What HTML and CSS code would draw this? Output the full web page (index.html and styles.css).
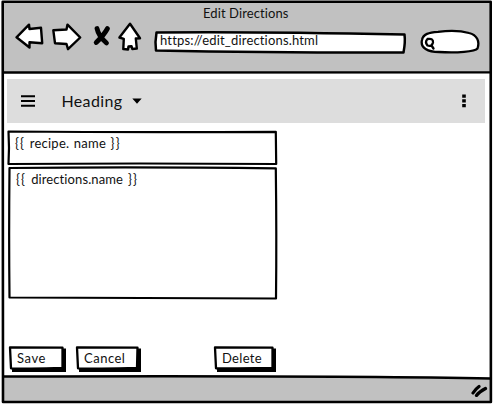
FILE: index.html
```html
<!DOCTYPE html>
<html lang="en">
<head>
<meta charset="utf-8">
<title>Edit Directions</title>
<link rel="stylesheet" href="styles.css">
</head>
<body>
<div class="window">
  <header class="chrome">
    <div class="title"><span class="t-title">Edit Directions</span></div>
    <div class="tools">
      <svg class="nav" width="138" height="40" viewBox="0 0 138 40">
        <g fill="#fff" stroke="#000" stroke-width="2.4" stroke-linejoin="round">
          <path d="M2.500 15.300 15 2.700 15.500 7 27 5.800 28.200 21.200 15.500 20.300 15.500 25.500Z"/>
          <path d="M39.300 8.200 52.500 7.500 53.500 2.600 66.200 15.500 54 27.200 52.500 22 41 21.200Z"/>
          <path d="M116 1.800 126 16.200 121.800 16.500 122.800 26.500 118.300 27 117.500 24.200 114.500 24.500 114 27.500 109.300 27 109.800 16.800 105.400 15.500Z"/>
        </g>
        <path d="M83 6.500Q84.500 14 92.500 21M93.500 6.500Q90 13 82.200 20.500" fill="none" stroke="#000" stroke-width="4.800" stroke-linecap="round"/>
      </svg>
      <div class="url">
        <svg class="sketch" viewBox="0 0 252 24"><path d="M2.500 2.500Q100 1.500 250.500 4.500Q251.500 12 249.500 22.500Q120 22.800 2 20.500Q.8 12 2.500 2.500Z" fill="#fff" stroke="#000" stroke-width="2.500" stroke-linejoin="round"/></svg>
        <span class="t-url">https://edit_directions.html</span>
      </div>
      <svg class="search" width="62" height="28" viewBox="0 0 62 28">
        <path d="M2 12C3 6 9 4.500 18 3.800C29 2.500 42 3 49 5C57 7 60 13 57.500 20.500C55 23.500 37 25.300 19 24C8 24 0 20 2 12Z" fill="#fff" stroke="#000" stroke-width="2.300"/>
        <path d="M7.500 11Q13.500 10 13 14.500Q12 18.800 7.500 17.500Q4.500 14 7.500 11M11.500 17.500 13.500 20.500" fill="none" stroke="#000" stroke-width="2.300" stroke-linecap="round"/>
      </svg>
    </div>
  </header>
  <main class="page">
    <div class="appbar">
      <svg class="burger" width="14" height="12" viewBox="0 0 14 12"><path d="M0 1.300H14M0 6H14M0 10.700H14" stroke="#000" stroke-width="2"/></svg>
      <span class="t-heading">Heading</span>
      <svg class="caret" width="10" height="6" viewBox="0 0 10 6"><path d="M.3 .5H9.700L5 5.800Z"/></svg>
      <svg class="dots" width="4" height="14" viewBox="0 0 4 14"><path d="M.2 .5H3.800V3.800H.2ZM.2 5.200H3.800V8.500H.2ZM.2 10H3.800V13.300H.2Z"/></svg>
    </div>
    <div class="box recipe">
      <svg class="sketch" viewBox="0 0 270 36"><path d="M1.500 1.500Q130 2.500 268.800 1.800L269.200 34Q130 33 1.500 34Q2.500 18 1.500 1.500Z" fill="#fff" stroke="#000" stroke-width="2.200" stroke-linejoin="round"/></svg>
      <span class="t-recipe"><span class="brace">{{</span> recipe. name <span class="brace">}}</span></span>
    </div>
    <div class="box directions">
      <svg class="sketch" viewBox="0 0 270 134"><path d="M2.500 2Q130 .8 268.800 2.300Q269.700 70 269 132.500Q130 131.800 2.500 131.500Q1.800 70 2.500 2Z" fill="#fff" stroke="#000" stroke-width="2.200" stroke-linejoin="round"/></svg>
      <span class="t-directions"><span class="brace">{{</span> directions.name <span class="brace">}}</span></span>
    </div>
    <div class="actions">
      <button class="btn save"><svg class="sketch" viewBox="0 0 57 26"><path d="M53 2.500H57V26H3V22H53Z"/><path d="M1 1.500 53.500 1.700 53.500 22Q25 23 2 22.300Z" fill="#fff" stroke="#000" stroke-width="2.300" stroke-linejoin="round"/></svg><span class="t-save">Save</span></button>
      <button class="btn cancel"><svg class="sketch" viewBox="0 0 65 26"><path d="M61 2.500H65V26H3V22H61Z"/><path d="M1 1.500 61.500 1.700 61 22Q30 23 2 22.300Z" fill="#fff" stroke="#000" stroke-width="2.300" stroke-linejoin="round"/></svg><span class="t-cancel">Cancel</span></button>
      <button class="btn delete"><svg class="sketch" viewBox="0 0 62 26"><path d="M58 2.500H62V26H3V22H58Z"/><path d="M1 1.500 58.500 1.700 58.500 22Q30 22.800 2 22.300Z" fill="#fff" stroke="#000" stroke-width="2.300" stroke-linejoin="round"/></svg><span class="t-delete">Delete</span></button>
    </div>
  </main>
  <footer class="status">
    <svg class="sketch" viewBox="0 0 493 29"><path d="M3 1.500Q350 .5 491 3.500V27H3Z" fill="#c1c1c1"/><path d="M3 1.500Q350 .5 491 3.500" fill="none" stroke="#000" stroke-width="2.300"/></svg>
    <svg class="grip" width="18" height="14" viewBox="0 0 18 14"><path d="M3 10Q5.500 6 9 3.500M6.500 12.500Q9 9 15.500 5.500" fill="none" stroke="#000" stroke-width="3.200" stroke-linecap="round"/></svg>
  </footer>
  <svg class="sketch frame" viewBox="0 0 493 404"><path d="M2.700 1.700H490.700L490.900 402H3Q2 200 2.700 1.700Z" fill="none" stroke="#000" stroke-width="2.600" stroke-linejoin="round"/><path d="M2 72.500Q250 73.300 491 72.300" fill="none" stroke="#000" stroke-width="2.300"/></svg>
</div>
</body>
</html>
```
FILE: styles.css
```css
* { box-sizing: border-box; }
body {
  margin: 0;
  background: #fff;
  color: #111;
  font: 13px/16px Lato, "Open Sans", sans-serif;
  font-variant-ligatures: none;
}
svg { display: block; }
span { position: relative; white-space: nowrap; }
.window {
  position: relative;
  display: grid;
  grid-template-rows: 73px 302px 29px;
  width: 493px;
  height: 404px;
}
.sketch {
  position: absolute;
  inset: 0;
  width: 100%;
  height: 100%;
  overflow: visible;
}
.frame { pointer-events: none; }
.chrome {
  margin: 1px 2px 0;
  padding-top: 4px;
  background: #c1c1c1;
}
.title { height: 17px; padding-left: 201px; }
.tools { display: flex; padding-left: 12px; }
.nav { flex: none; }
.url {
  position: relative;
  width: 252px;
  height: 24px;
  margin: 8px 0 0 2px;
  padding: 2px 6px;
}
.search { margin: 6px 0 0 14px; flex: none; }
.page { padding: 6px 6px 0 7px; }
.appbar {
  display: flex;
  align-items: center;
  width: 478px;
  height: 44px;
  padding: 0 19px 0 14px;
  background: #ddd;
}
.t-heading {
  width: 61px;
  margin: -1px 0 0 26.5px;
  font-size: 16px;
  line-height: 20px;
  letter-spacing: .35px;
}
.burger, .caret, .dots { flex: none; }
.caret { margin-left: 9.5px; }
.dots { margin-left: auto; }
.box { position: relative; width: 270px; }
.recipe { height: 36px; margin-top: 7px; padding: 5px 8px; }
.directions { height: 134px; padding: 5px 9px; }
.t-title { letter-spacing: .1px; }
.t-url { letter-spacing: .17px; }
.t-recipe { letter-spacing: .25px; word-spacing: .9px; }
.t-directions { letter-spacing: .1px; word-spacing: 1.500px; }
.brace { letter-spacing: 1.2px; }
.t-save { letter-spacing: .6px; }
.t-cancel { letter-spacing: .5px; }
.t-delete { letter-spacing: .3px; }
.actions { display: flex; margin: 46px 0 0 2px; }
.btn {
  position: relative;
  height: 26px;
  padding: 0 0 2px 8px;
  border: 0;
  background: none;
  color: inherit;
  font: inherit;
  text-align: left;
}
.save { width: 57px; }
.cancel { width: 65px; margin-left: 10px; }
.delete { width: 62px; margin-left: 73px; }
.status {
  position: relative;
  display: flex;
  justify-content: flex-end;
  padding: 8px 5px 0 0;
}
.grip { position: relative; }
```
